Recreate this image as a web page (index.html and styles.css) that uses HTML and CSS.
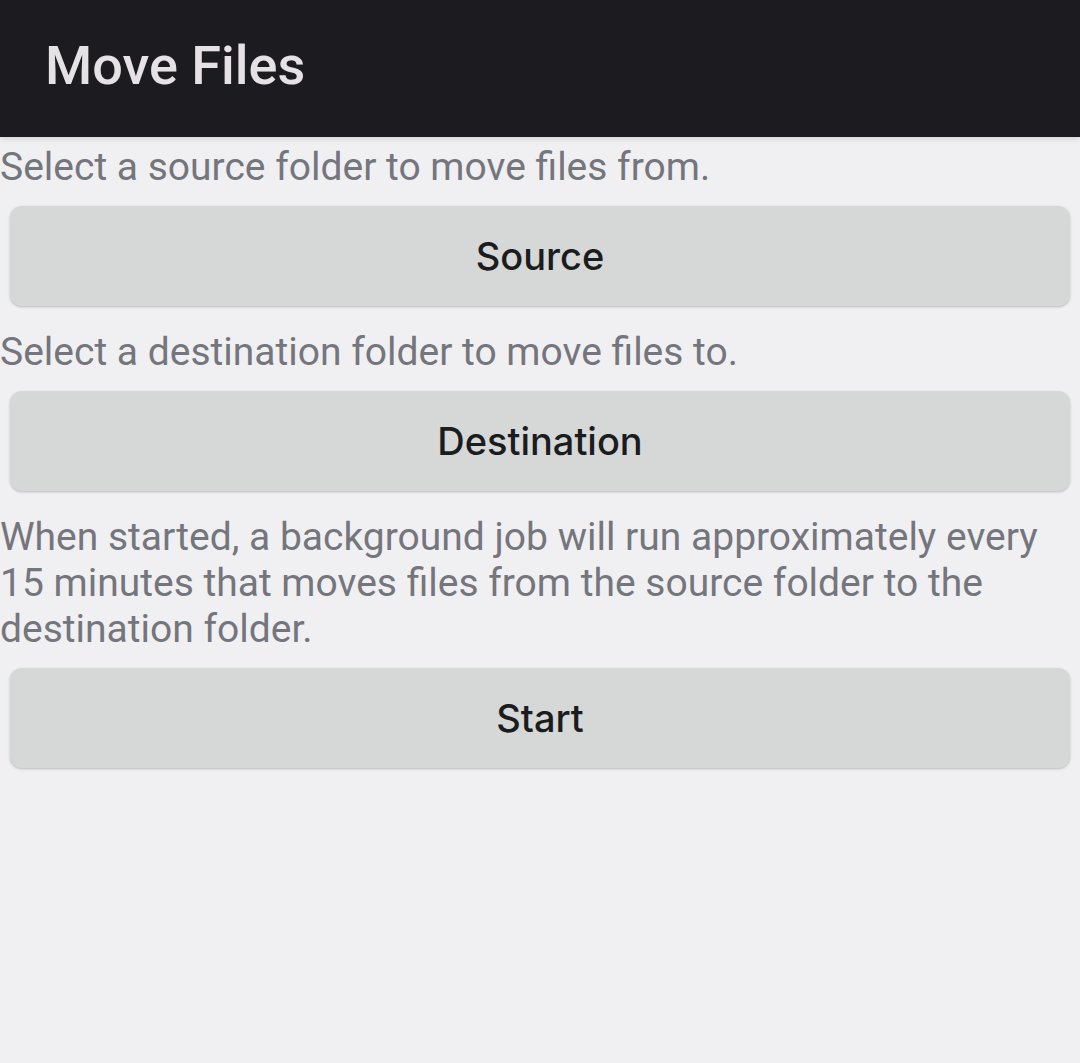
FILE: index.html
```html
<!DOCTYPE html>
<html>
<head>
<meta charset="utf-8">
<link rel="stylesheet" href="styles.css">
</head>
<body>
<header class="appbar"><h1 class="title">Move Files</h1></header>
<main class="content">
  <p class="label first">Select a source folder to move files from.</p>
  <div class="btn-wrap"><button class="btn">Source</button></div>
  <p class="label">Select a destination folder to move files to.</p>
  <div class="btn-wrap"><button class="btn">Destination</button></div>
  <p class="label">When started, a background job will run approximately every 15 minutes that moves files from the source folder to the destination folder.</p>
  <div class="btn-wrap"><button class="btn">Start</button></div>
</main>
</body>
</html>
```

FILE: styles.css
```css
html, body {
  margin: 0;
  padding: 0;
  background: #f0f0f2;
  height: 100%;
}
body {
  font-family: Roboto, "Liberation Sans", sans-serif;
}
.appbar {
  height: 137px;
  background: #1c1b1f;
  display: flex;
  align-items: center;
  padding-left: 45px;
  box-shadow: 0 2px 6px rgba(0,0,0,0.12);
  position: relative;
  z-index: 1;
}
.title {
  margin: 0;
  font-weight: 500;
  font-size: 54px;
  color: #e6e1e5;
  line-height: 1;
  padding-bottom: 6px;
}
.content {
  display: flex;
  flex-direction: column;
}
.label {
  margin: 0;
  font-size: 39px;
  line-height: 46px;
  color: #75767d;
  padding-right: 30px;
}
.label.first {
  margin-top: 7px;
}
.btn-wrap {
  padding: 16px 10px 23px;
}
.btn {
  display: block;
  width: 100%;
  height: 100px;
  border: none;
  border-radius: 12px;
  background: #d6d8d7;
  color: #1b1c1e;
  font-family: Inter, "Open Sans", sans-serif;
  font-weight: 500;
  font-size: 38px;
  box-shadow: 0 1px 3px rgba(0,0,0,0.18), 0 1px 2px rgba(0,0,0,0.06);
  padding: 0;
}
```
